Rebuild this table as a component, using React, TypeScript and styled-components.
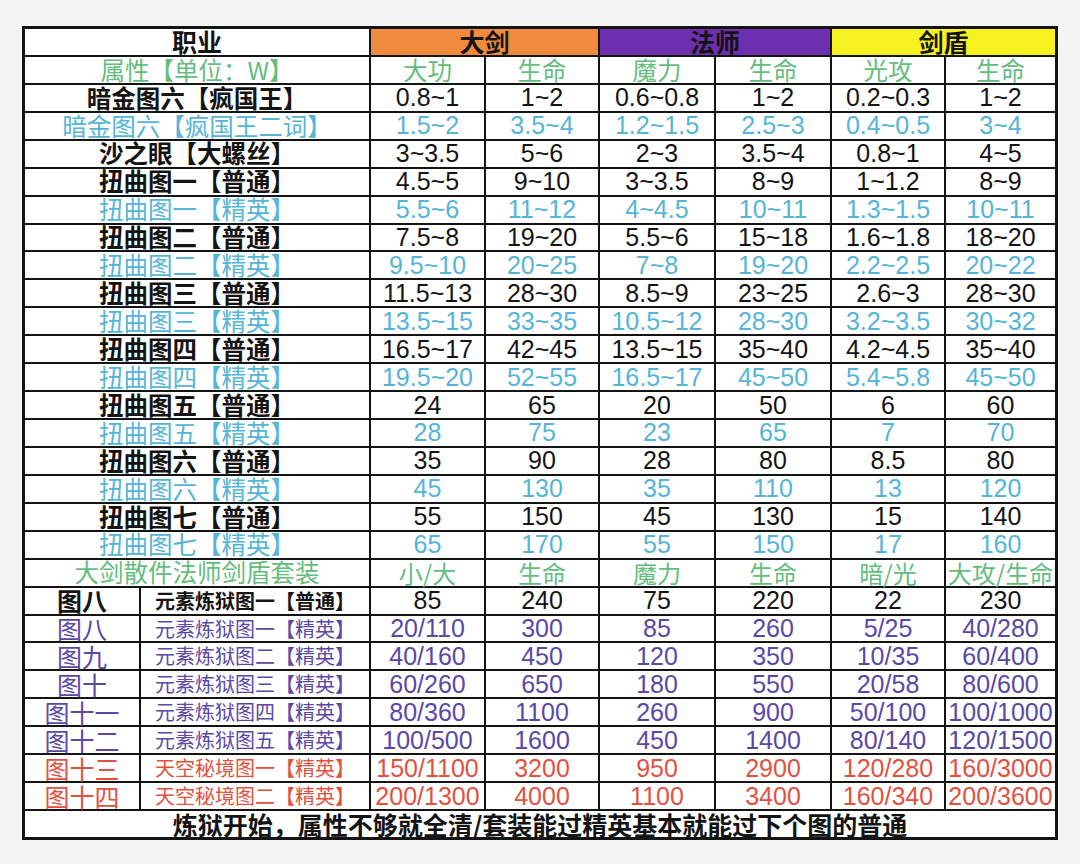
import React from "react";
import styled, { createGlobalStyle } from "styled-components";

type Tone = "black" | "green" | "blue" | "purple" | "red";
type Fill = "white" | "orange" | "purple" | "yellow";

const toneColor: Record<Tone, string> = {
  black: "#141414",
  green: "#63bd7c",
  blue: "#55b5d6",
  purple: "#5a48a6",
  red: "#e2513f",
};

const fillColor: Record<Fill, string> = {
  white: "#ffffff",
  orange: "#f08a3d",
  purple: "#6c2fb0",
  yellow: "#f6f21e",
};

const Global = createGlobalStyle`
  html, body { margin: 0; padding: 0; background: #f5f5f5; }
  body { width: 1080px; height: 864px; overflow: hidden; }
`;

const Page = styled.div`
  padding: 26px 22px 0 22px;
`;

const Sheet = styled.div`
  display: grid;
  grid-template-columns: 114px 228px 113px 112px 114px 114px 112px 1fr;
  grid-auto-rows: 1fr;
  gap: 2px;
  padding: 3px;
  width: 1036px;
  height: 814px;
  box-sizing: border-box;
  background: #141414;
  font-family: "Liberation Sans", "Noto Sans CJK SC", sans-serif;
`;

const Cell = styled.div<{
  $span?: number;
  $tone?: Tone;
  $fill?: Fill;
  $bold?: boolean;
  $size?: number;
}>`
  grid-column: span ${(p) => p.$span ?? 1};
  display: flex;
  align-items: center;
  justify-content: center;
  min-width: 0;
  min-height: 0;
  background: ${(p) => fillColor[p.$fill ?? "white"]};
  color: ${(p) => toneColor[p.$tone ?? "black"]};
  font-weight: ${(p) => (p.$bold ? 700 : 400)};
  font-size: ${(p) => p.$size ?? 25}px;
  line-height: 1;
  white-space: nowrap;
`;

const Label = styled(Cell)`
  font-family: "Noto Sans CJK SC", sans-serif;
`;

type RangeRow = { label: string; tone: Tone; values: string[] };
type MapRow = { map: string; label: string; tone: Tone; values: string[] };

const rangeRows: RangeRow[] = [
  { label: "暗金图六【疯国王】", tone: "black", values: ["0.8~1", "1~2", "0.6~0.8", "1~2", "0.2~0.3", "1~2"] },
  { label: "暗金图六【疯国王二词】", tone: "blue", values: ["1.5~2", "3.5~4", "1.2~1.5", "2.5~3", "0.4~0.5", "3~4"] },
  { label: "沙之眼【大螺丝】", tone: "black", values: ["3~3.5", "5~6", "2~3", "3.5~4", "0.8~1", "4~5"] },
  { label: "扭曲图一【普通】", tone: "black", values: ["4.5~5", "9~10", "3~3.5", "8~9", "1~1.2", "8~9"] },
  { label: "扭曲图一【精英】", tone: "blue", values: ["5.5~6", "11~12", "4~4.5", "10~11", "1.3~1.5", "10~11"] },
  { label: "扭曲图二【普通】", tone: "black", values: ["7.5~8", "19~20", "5.5~6", "15~18", "1.6~1.8", "18~20"] },
  { label: "扭曲图二【精英】", tone: "blue", values: ["9.5~10", "20~25", "7~8", "19~20", "2.2~2.5", "20~22"] },
  { label: "扭曲图三【普通】", tone: "black", values: ["11.5~13", "28~30", "8.5~9", "23~25", "2.6~3", "28~30"] },
  { label: "扭曲图三【精英】", tone: "blue", values: ["13.5~15", "33~35", "10.5~12", "28~30", "3.2~3.5", "30~32"] },
  { label: "扭曲图四【普通】", tone: "black", values: ["16.5~17", "42~45", "13.5~15", "35~40", "4.2~4.5", "35~40"] },
  { label: "扭曲图四【精英】", tone: "blue", values: ["19.5~20", "52~55", "16.5~17", "45~50", "5.4~5.8", "45~50"] },
  { label: "扭曲图五【普通】", tone: "black", values: ["24", "65", "20", "50", "6", "60"] },
  { label: "扭曲图五【精英】", tone: "blue", values: ["28", "75", "23", "65", "7", "70"] },
  { label: "扭曲图六【普通】", tone: "black", values: ["35", "90", "28", "80", "8.5", "80"] },
  { label: "扭曲图六【精英】", tone: "blue", values: ["45", "130", "35", "110", "13", "120"] },
  { label: "扭曲图七【普通】", tone: "black", values: ["55", "150", "45", "130", "15", "140"] },
  { label: "扭曲图七【精英】", tone: "blue", values: ["65", "170", "55", "150", "17", "160"] },
];

const mapRows: MapRow[] = [
  { map: "图八", label: "元素炼狱图一【普通】", tone: "black", values: ["85", "240", "75", "220", "22", "230"] },
  { map: "图八", label: "元素炼狱图一【精英】", tone: "purple", values: ["20/110", "300", "85", "260", "5/25", "40/280"] },
  { map: "图九", label: "元素炼狱图二【精英】", tone: "purple", values: ["40/160", "450", "120", "350", "10/35", "60/400"] },
  { map: "图十", label: "元素炼狱图三【精英】", tone: "purple", values: ["60/260", "650", "180", "550", "20/58", "80/600"] },
  { map: "图十一", label: "元素炼狱图四【精英】", tone: "purple", values: ["80/360", "1100", "260", "900", "50/100", "100/1000"] },
  { map: "图十二", label: "元素炼狱图五【精英】", tone: "purple", values: ["100/500", "1600", "450", "1400", "80/140", "120/1500"] },
  { map: "图十三", label: "天空秘境图一【精英】", tone: "red", values: ["150/1100", "3200", "950", "2900", "120/280", "160/3000"] },
  { map: "图十四", label: "天空秘境图二【精英】", tone: "red", values: ["200/1300", "4000", "1100", "3400", "160/340", "200/3600"] },
];

const statHeads = ["大功", "生命", "魔力", "生命", "光攻", "生命"];
const setHeads = ["小/大", "生命", "魔力", "生命", "暗/光", "大攻/生命"];

export default function App() {
  return (
    <>
      <Global />
      <Page>
        <Sheet>
          <Label $span={2} $bold $size={25}>职业</Label>
          <Label $span={2} $fill="orange" $bold $size={25}>大剑</Label>
          <Label $span={2} $fill="purple" $bold $size={25}>法师</Label>
          <Label $span={2} $fill="yellow" $bold $size={25}>剑盾</Label>

          <Label $span={2} $tone="green" $size={24.5}>属性【单位：W】</Label>
          {statHeads.map((h, i) => (
            <Label key={`s${i}`} $tone="green" $size={24.5}>{h}</Label>
          ))}

          {rangeRows.map((r, ri) => (
            <React.Fragment key={`r${ri}`}>
              <Label $span={2} $tone={r.tone} $bold={r.tone === "black"} $size={24.5}>
                {r.label}
              </Label>
              {r.values.map((v, vi) => (
                <Cell key={vi} $tone={r.tone}>{v}</Cell>
              ))}
            </React.Fragment>
          ))}

          <Label $span={2} $tone="green" $size={24.5}>大剑散件法师剑盾套装</Label>
          {setHeads.map((h, i) => (
            <Label key={`h${i}`} $tone="green" $size={24}>{h}</Label>
          ))}

          {mapRows.map((r, ri) => (
            <React.Fragment key={`m${ri}`}>
              <Label $tone={r.tone} $bold={r.tone === "black"} $size={25}>{r.map}</Label>
              <Label $tone={r.tone} $bold={r.tone === "black"} $size={20}>{r.label}</Label>
              {r.values.map((v, vi) => (
                <Cell key={vi} $tone={r.tone}>{v}</Cell>
              ))}
            </React.Fragment>
          ))}

          <Label $span={8} $bold $size={25}>
            炼狱开始，属性不够就全清/套装能过精英基本就能过下个图的普通
          </Label>
        </Sheet>
      </Page>
    </>
  );
}
